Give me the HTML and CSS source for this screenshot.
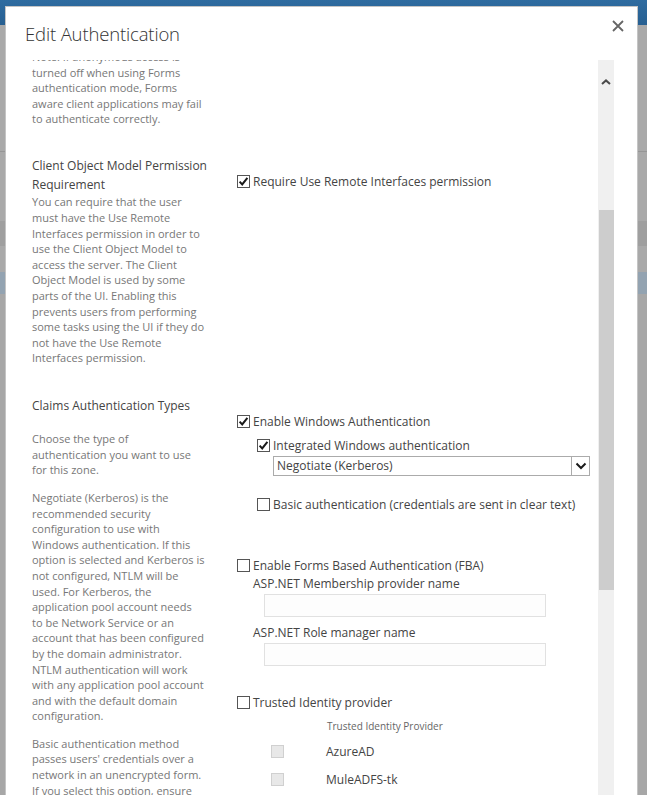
FILE: index.html
```html
<!DOCTYPE html>
<html lang="en">
<head>
<meta charset="utf-8">
<title>Edit Authentication</title>
<link rel="stylesheet" href="styles.css">
</head>
<body>
<div class="backdrop">
  <div class="bg-top"></div>
  <div class="bg-gap1"></div>
  <div class="bg-line"></div>
  <div class="bg-gap2"></div>
  <div class="bg-dark"></div>
  <div class="bg-gap3"></div>
  <div class="bg-blue"></div>
</div>

<div class="dialog">
  <div class="dlg-head">
    <h1 class="dlg-title">Edit Authentication</h1>
    <span class="dlg-close" aria-label="Close">
      <svg width="12" height="12" viewBox="0 0 12 12"><path d="M1 1 L11 11 M11 1 L1 11" stroke="#666" stroke-width="1.8" fill="none"/></svg>
    </span>
  </div>
  <div class="dlg-body">
    <div class="scroll-area">
      <div class="scroll-content">

        <section class="sec">
          <div class="sec-left">
            <p class="desc">Note: If anonymous access is<br>turned off when using Forms<br>authentication mode, Forms<br>aware client applications may fail<br>to authenticate correctly.</p>
          </div>
          <div class="sec-right"></div>
        </section>

        <section class="sec">
          <div class="sec-left">
            <h2 class="sec-title">Client Object Model Permission<br>Requirement</h2>
            <p class="desc">You can require that the user<br>must have the Use Remote<br>Interfaces permission in order to<br>use the Client Object Model to<br>access the server. The Client<br>Object Model is used by some<br>parts of the UI. Enabling this<br>prevents users from performing<br>some tasks using the UI if they do<br>not have the Use Remote<br>Interfaces permission.</p>
          </div>
          <div class="sec-right">
            <div class="chk-row">
              <span class="cb cb-on"><svg width="13" height="13" viewBox="0 0 13 13"><path d="M2.6 6.6 L5.2 9.4 L10.4 2.8" stroke="#1a1a1a" stroke-width="2" fill="none"/></svg></span>
              <span class="lbl">Require Use Remote Interfaces permission</span>
            </div>
          </div>
        </section>

        <section class="sec">
          <div class="sec-left">
            <h2 class="sec-title">Claims Authentication Types</h2>
            <div class="desc-block">
              <p class="desc">Choose the type of<br>authentication you want to use<br>for this zone.</p>
              <p class="desc">Negotiate (Kerberos) is the<br>recommended security<br>configuration to use with<br>Windows authentication. If this<br>option is selected and Kerberos is<br>not configured, NTLM will be<br>used. For Kerberos, the<br>application pool account needs<br>to be Network Service or an<br>account that has been configured<br>by the domain administrator.<br>NTLM authentication will work<br>with any application pool account<br>and with the default domain<br>configuration.</p>
              <p class="desc">Basic authentication method<br>passes users' credentials over a<br>network in an unencrypted form.<br>If you select this option, ensure<br>that Secure Sockets Layer (SSL) is<br>enabled.</p>
            </div>
          </div>
          <div class="sec-right">
            <div class="chk-row">
              <span class="cb cb-on"><svg width="13" height="13" viewBox="0 0 13 13"><path d="M2.6 6.6 L5.2 9.4 L10.4 2.8" stroke="#1a1a1a" stroke-width="2" fill="none"/></svg></span>
              <span class="lbl">Enable Windows Authentication</span>
            </div>
            <div class="win-opts">
              <div class="chk-row">
                <span class="cb cb-on"><svg width="13" height="13" viewBox="0 0 13 13"><path d="M2.6 6.6 L5.2 9.4 L10.4 2.8" stroke="#1a1a1a" stroke-width="2" fill="none"/></svg></span>
                <span class="lbl">Integrated Windows authentication</span>
              </div>
              <div class="select">
                <span class="select-text">Negotiate (Kerberos)</span>
                <span class="select-btn"><svg width="12" height="8" viewBox="0 0 12 8"><path d="M1.5 1.5 L6 6 L10.5 1.5" stroke="#1a1a1a" stroke-width="2" fill="none"/></svg></span>
              </div>
              <div class="chk-row basic-row">
                <span class="cb"></span>
                <span class="lbl">Basic authentication (credentials are sent in clear text)</span>
              </div>
            </div>

            <div class="chk-row fba-row">
              <span class="cb"></span>
              <span class="lbl">Enable Forms Based Authentication (FBA)</span>
            </div>
            <div class="fba-opts">
              <div class="field-lbl">ASP.NET Membership provider name</div>
              <div class="field-input"></div>
              <div class="field-lbl">ASP.NET Role manager name</div>
              <div class="field-input"></div>
            </div>

            <div class="chk-row tip-row">
              <span class="cb"></span>
              <span class="lbl">Trusted Identity provider</span>
            </div>
            <div class="tip-table">
              <div class="tip-head">Trusted Identity Provider</div>
              <div class="tip-item">
                <span class="cb cb-dis"></span>
                <span class="tip-name">AzureAD</span>
              </div>
              <div class="tip-item">
                <span class="cb cb-dis"></span>
                <span class="tip-name">MuleADFS-tk</span>
              </div>
            </div>
          </div>
        </section>

      </div>
    </div>
    <div class="vscroll">
      <div class="vs-up"><svg width="10" height="6" viewBox="0 0 10 6"><path d="M1 5 L5 1.4 L9 5" stroke="#4a4a4a" stroke-width="2" fill="none"/></svg></div>
      <div class="vs-space"></div>
      <div class="vs-thumb"></div>
    </div>
  </div>
</div>
</body>
</html>
```
FILE: styles.css
```css
html, body {
  margin: 0;
  padding: 0;
}
body {
  width: 647px;
  height: 795px;
  overflow: hidden;
  position: relative;
  background: #a7a7a7;
  font-family: "Open Sans", "Noto Sans", "DejaVu Sans", sans-serif;
}

/* dimmed page behind the dialog */
.backdrop {
  display: flex;
  flex-direction: column;
}
.bg-top { height: 25px; background: linear-gradient(#2f6ca0, #275f91); }
.bg-gap1 { height: 126px; background: #a9a9a9; }
.bg-line { height: 1px; background: #969696; }
.bg-gap2 { height: 69px; background: #a9a9a9; }
.bg-dark { height: 25px; background: #9f9f9f; }
.bg-gap3 { height: 26px; background: #a9a9a9; }
.bg-blue { height: 22px; background: #93a3b1; }

/* dialog window, lying over the page */
.dialog {
  position: absolute;
  left: 5px;
  top: 6px;
  width: 633px;
  height: 820px;
  box-sizing: border-box;
  background: #fff;
  border: 1px solid #c4c4c4;
  display: flex;
  flex-direction: column;
}
.dlg-head {
  height: 53px;
  box-sizing: border-box;
  display: flex;
  justify-content: space-between;
  align-items: flex-start;
  padding: 13px 13px 0 19px;
}
.dlg-title {
  margin: 0;
  font-weight: 300;
  font-size: 18.5px;
  letter-spacing: -0.15px;
  line-height: 28px;
  color: #333;
}
.dlg-close {
  display: block;
  width: 12px;
  height: 12px;
  margin-top: 0;
}
.dlg-close svg { display: block; }

.dlg-body {
  flex: 1;
  display: flex;
  min-height: 0;
  padding-right: 23px;
}
.scroll-area {
  flex: 1;
  overflow: hidden;
}
.scroll-content {
  margin-top: -11px;
  padding-left: 26px;
  display: flex;
  flex-direction: column;
  gap: 29.5px;
}
.sec {
  display: grid;
  grid-template-columns: 205px 1fr;
}
.sec-title {
  margin: 0;
  font-weight: 400;
  font-size: 12px;
  line-height: 19px;
  color: #444;
}
.desc {
  margin: 0;
  font-size: 11px;
  line-height: 15.6px;
  color: #777;
}
.desc-block {
  margin-top: 16.7px;
  display: flex;
  flex-direction: column;
  gap: 12px;
}
.sec-right {
  padding-top: 16px;
}

/* checkbox rows */
.chk-row {
  display: flex;
  align-items: center;
  height: 19px;
}
.cb {
  width: 13px;
  height: 13px;
  box-sizing: border-box;
  border: 1px solid #555;
  background: #fff;
  flex: none;
  display: block;
}
.cb svg {
  display: block;
  margin: -1px;
}
.cb-dis {
  border-color: #d0d0d0;
  background: #e8e8e8;
}
.lbl {
  margin-left: 3px;
  font-size: 12px;
  color: #444;
  white-space: nowrap;
}

.win-opts {
  padding-left: 20px;
  margin-top: 5px;
}
.select {
  margin-left: 16px;
  margin-top: 1px;
  width: 317px;
  height: 20px;
  box-sizing: border-box;
  border: 1px solid #ababab;
  display: flex;
  align-items: center;
}
.select-text {
  flex: 1;
  padding-left: 3px;
  font-size: 12px;
  color: #444;
}
.select-btn {
  width: 18px;
  height: 18px;
  box-sizing: border-box;
  border-left: 1px solid #ababab;
  display: flex;
  align-items: center;
  justify-content: center;
}
.basic-row {
  margin-top: 19.5px;
}

.fba-row {
  margin-top: 42px;
  height: 18px;
}
.fba-opts {
  padding-left: 16px;
}
.field-lbl {
  font-size: 12px;
  line-height: 18px;
  color: #444;
  padding-top: 1px;
}
.field-input {
  margin: 1px 0 6px 11px;
  width: 282px;
  height: 23px;
  box-sizing: border-box;
  border: 1px solid #e1e1e1;
  background: #fdfdfd;
}

.tip-row {
  margin-top: 27px;
  height: 18px;
}
.tip-table {
  margin-top: 7px;
}
.tip-head {
  padding-left: 90px;
  font-size: 10px;
  line-height: 16px;
  color: #666;
  margin-bottom: 3px;
}
.tip-item {
  display: flex;
  align-items: center;
  height: 28px;
  padding-left: 34px;
}
.tip-name {
  margin-left: 42px;
  font-size: 12px;
  color: #444;
}

/* scrollbar drawn for the dialog body */
.vscroll {
  width: 16px;
  flex: none;
  background: #f0f0f0;
  display: flex;
  flex-direction: column;
  align-items: center;
}
.vs-up {
  height: 44px;
  display: flex;
  align-items: center;
  justify-content: center;
}
.vs-up svg { display: block; }
.vs-space { height: 106px; }
.vs-thumb {
  width: 15px;
  height: 380px;
  background: #cdcdcd;
}
```
